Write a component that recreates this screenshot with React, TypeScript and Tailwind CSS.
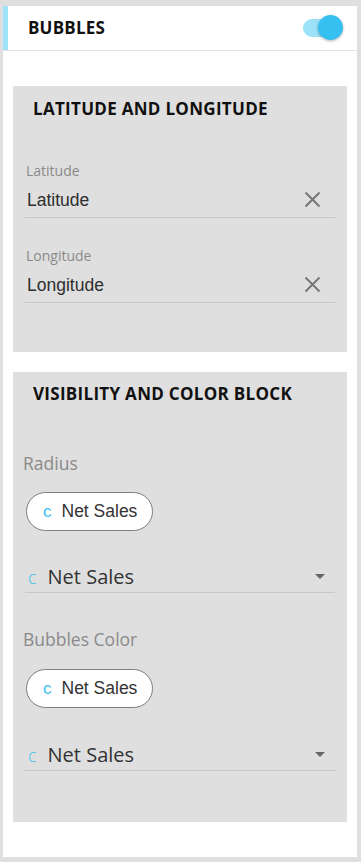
const openSans = "font-['Open_Sans',sans-serif]";
const arial = "font-['Liberation_Sans',Arial,sans-serif]";

const ClearIcon = () => (
  <svg width="17" height="17" viewBox="0 0 17 17" className="mr-[14px] mt-[4px]">
    <path d="M1.5 1.5 L15.5 15.5 M15.5 1.5 L1.5 15.5" stroke="#777" strokeWidth="2" />
  </svg>
);

const TextField = ({ label, value, className }: { label: string; value: string; className: string }) => (
  <div className={className}>
    <div className={`${openSans} text-[14px] leading-[16px] text-[#8a8a8a] pl-[1px]`}>{label}</div>
    <div className="flex justify-between items-start h-[39px] pt-[8px] border-b border-[#c7c7c7]">
      <span className={`${arial} text-[17.5px] leading-[26px] text-[#2e2e2e] pl-[2px]`}>{value}</span>
      <ClearIcon />
    </div>
  </div>
);

const Pill = ({ className }: { className: string }) => (
  <div className={`${className} ml-[13px] w-[127px] h-[39px] rounded-full border border-[#7d7d7d] bg-white flex items-center pl-[16px] gap-[10px]`}>
    <span className={`${arial} text-[17px] text-[#3dbdf0] leading-none`}>c</span>
    <span className={`${arial} text-[17.5px] text-[#333] leading-none`}>Net Sales</span>
  </div>
);

const Select = ({ className }: { className: string }) => (
  <div className={`${className} mx-[12px] h-[36px] pt-[6px] border-b border-[#c7c7c7] flex items-start justify-between`}>
    <div className="flex items-baseline gap-[11px] pl-[3px]">
      <span className={`${openSans} font-light text-[18px] leading-[28px] text-[#45c0ee]`}>c</span>
      <span className={`${openSans} text-[20px] leading-[28px] text-[#333]`}>Net Sales</span>
    </div>
    <svg width="10" height="6" viewBox="0 0 10 6" className="mt-[11px] mr-[10px]">
      <path d="M0 0 L10 0 L5 5 Z" fill="#666" />
    </svg>
  </div>
);

export default function App() {
  return (
    <div className="w-[361px] h-[862px] bg-[#dfdfdf] pt-[6px] pl-[3px] pr-[4px] pb-[5px]">
      <div className="h-full bg-white flex flex-col">
        <div className="h-[45px] border-b border-[#e2e2e2] flex items-stretch">
          <div className="w-[5px] bg-[#9fe3f8]" />
          <div className="flex-1 flex items-center justify-between pl-[20px] pr-[14px]">
            <span className={`${openSans} font-bold text-[17px] text-[#111] tracking-[0.2px]`}>BUBBLES</span>
            <div className="relative w-[40px] h-[24px]">
              <div className="absolute left-0 top-[3px] w-[36px] h-[18px] rounded-full bg-[#9be1f8]" />
              <div className="absolute right-0 top-[-1px] w-[25px] h-[25px] rounded-full bg-[#35c0f1] shadow-[0_1px_3px_rgba(0,0,0,0.3)]" />
            </div>
          </div>
        </div>

        <div className="px-[10px] pt-[35px]">
          <div className="bg-[#dfdfdf] pb-[49px]">
            <div className={`${openSans} font-bold text-[17px] leading-[20px] text-[#111] pt-[13px] pl-[20px] tracking-[0.3px]`}>
              LATITUDE AND LONGITUDE
            </div>
            <TextField className="mt-[44px] mx-[12px]" label="Latitude" value="Latitude" />
            <TextField className="mt-[30px] mx-[12px]" label="Longitude" value="Longitude" />
          </div>

          <div className="bg-[#dfdfdf] mt-[20px] pb-[51px]">
            <div className={`${openSans} font-bold text-[17px] leading-[20px] text-[#111] pt-[12px] pl-[20px] tracking-[0.3px]`}>
              VISIBILITY AND COLOR BLOCK
            </div>
            <div className={`${openSans} text-[17.5px] leading-[22px] text-[#8a8a8a] mt-[48px] pl-[10px]`}>Radius</div>
            <Pill className="mt-[18px]" />
            <Select className="mt-[26px]" />
            <div className={`${openSans} text-[17.5px] leading-[22px] text-[#8a8a8a] mt-[35px] pl-[10px]`}>Bubbles Color</div>
            <Pill className="mt-[19px]" />
            <Select className="mt-[27px]" />
          </div>
        </div>
      </div>
    </div>
  );
}
